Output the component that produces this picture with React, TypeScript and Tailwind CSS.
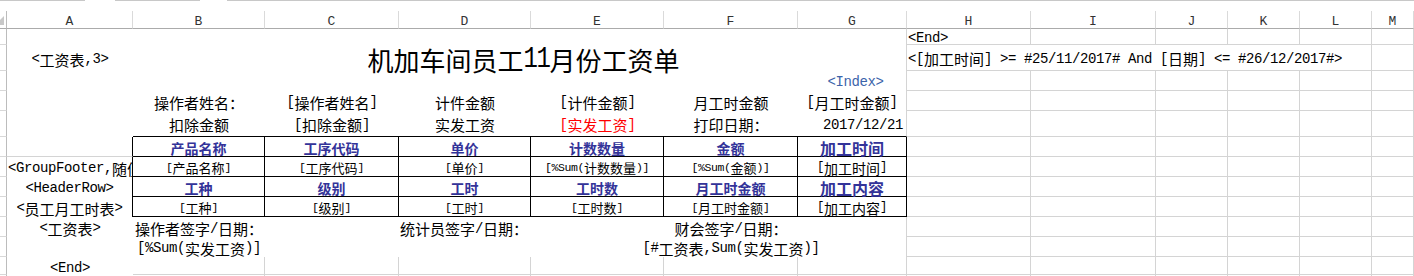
import React from "react";

type Sz = "m" | "s" | "g" | "t";

const cjkCls: Record<Sz, string> = {
  m: "text-[15px] font-['Noto_Sans_CJK_SC',sans-serif]",
  s: "text-[13px] font-['Noto_Sans_CJK_SC',sans-serif]",
  g: "text-[14px] font-['Noto_Sans_CJK_SC',sans-serif]",
  t: "text-[26px] font-['Noto_Sans_CJK_SC',sans-serif]",
};
const monoCls: Record<Sz, string> = {
  m: "text-[14px] tracking-[-0.4px] font-['Liberation_Mono',monospace]",
  s: "text-[11.5px] tracking-[-0.4px] font-['Liberation_Mono',monospace]",
  g: "text-[12.2px] tracking-[-0.32px] font-['Liberation_Mono',monospace]",
  t: "inline-block origin-bottom scale-y-[1.25] translate-y-[2px] text-[24px] tracking-[-1.4px] font-['Liberation_Mono',monospace]",
};

function T({ s, z = "m" }: { s: string; z?: Sz }) {
  const parts = s.match(/[\x20-\x7e]+|[^\x20-\x7e]+/g) || [];
  return (
    <>
      {parts.map((p, i) =>
        /[\x20-\x7e]/.test(p[0]) ? (
          <span key={i} className={monoCls[z]}>
            {p}
          </span>
        ) : (
          <span key={i} className={cjkCls[z]}>
            {p}
          </span>
        )
      )}
    </>
  );
}

const G = "border-r border-b border-[#d4d4d4]";
const CELL = "flex items-center whitespace-pre leading-none pt-[2px] min-w-0";
const SL = "border-r border-r-[#bcbcbc] border-b border-b-[#d8d8d8]";
const TB = "border-r border-b border-black";
const HB = "text-[14px] font-bold text-[#333399] font-['Noto_Sans_CJK_SC',sans-serif]";
const HG = "text-[16px] font-bold text-[#333399] font-['Noto_Sans_CJK_SC',sans-serif]";

function Grid5() {
  return (
    <>
      <div className={G} />
      <div className={G} />
      <div className={G} />
      <div className={G} />
      <div className={G} />
      <div className={G} />
    </>
  );
}

const letters = ["A", "B", "C", "D", "E", "F", "G", "H", "I", "J", "K", "L", "M"];

export default function App() {
  return (
    <div className="w-[1414px] h-[276px] overflow-hidden bg-white text-black">
      {/* top strip */}
      <div className="flex h-[11px]">
        <div className="w-[85px] border-t border-[#c8c8c8]" />
        <div className="w-[30px]" />
        <div className="w-[85px] border-t border-[#c8c8c8]" />
        <div className="w-[27px]" />
        <div className="flex-1 border-t border-[#c8c8c8]" />
      </div>
      <div className="grid grid-cols-[7px_126px_132px_134px_132px_133px_134px_109px_124px_125px_72px_72px_72px_1fr] grid-rows-[18px_16px_26px_20px_20px_26px_20px_20px_20px_20px_20px_20px_18px_20px]">
        {/* header row */}
        <div className="border-r border-[#bcbcbc] border-b border-b-[#ababab]">
          <svg width="7" height="17" viewBox="0 0 7 17">
            <polygon points="0,9 4,5 4,14 0,14" fill="#c8c8c8" />
          </svg>
        </div>
        {letters.map((l) => (
          <div
            key={l}
            className="flex items-center justify-center pt-[3px] border-r border-r-[#dadada] border-b border-b-[#ababab] text-[13px] leading-none text-[#333] font-['Liberation_Mono',monospace]"
          >
            {l}
          </div>
        ))}

        {/* r1 */}
        <div className={SL} />
        <div />
        <div />
        <div />
        <div />
        <div />
        <div />
        <div className="border-r border-[#d4d4d4]" />
        <div className={`${CELL} ${G} pl-[1px]`}>
          <T s="<End>" />
        </div>
        <div className={G} />
        <div className={G} />
        <div className={G} />
        <div className={G} />
        <div className={G} />

        {/* r2 */}
        <div className={SL} />
        <div className={`${CELL} justify-center`}>
          <T s="<工资表,3>" />
        </div>
        <div className={`${CELL} col-span-6 justify-center pl-[8px] pt-[4px] border-r border-[#d4d4d4]`}>
          <T s="机加车间员工11月份工资单" z="t" />
        </div>
        <div className={`${CELL} col-span-5 pl-[1px] ${G}`}>
          <T s="<[加工时间] >= #25/11/2017# And [日期] <= #26/12/2017#>" />
        </div>
        <div className={G} />

        {/* r3 */}
        <div className={SL} />
        <div />
        <div />
        <div />
        <div />
        <div />
        <div />
        <div className={`${CELL} justify-center pl-[7px] border-r border-[#d4d4d4] text-[#3c64aa]`}>
          <T s="<Index>" />
        </div>
        <Grid5 />
        <div className="hidden" />

        {/* r4 */}
        <div className={SL} />
        <div />
        <div className={`${CELL} justify-center`}>
          <T s="操作者姓名：" />
        </div>
        <div className={`${CELL} justify-center`}>
          <T s="[操作者姓名]" />
        </div>
        <div className={`${CELL} justify-center`}>
          <T s="计件金额" />
        </div>
        <div className={`${CELL} justify-center`}>
          <T s="[计件金额]" />
        </div>
        <div className={`${CELL} justify-center`}>
          <T s="月工时金额" />
        </div>
        <div className={`${CELL} justify-center border-r border-[#d4d4d4]`}>
          <T s="[月工时金额]" />
        </div>
        <Grid5 />
        <div className="hidden" />

        {/* r5 */}
        <div className={SL} />
        <div />
        <div className={`${CELL} justify-center border-b border-black`}>
          <T s="扣除金额" />
        </div>
        <div className={`${CELL} justify-center border-b border-black`}>
          <T s="[扣除金额]" />
        </div>
        <div className={`${CELL} justify-center border-b border-black`}>
          <T s="实发工资" />
        </div>
        <div className={`${CELL} justify-center border-b border-black text-[#ff0000]`}>
          <T s="[实发工资]" />
        </div>
        <div className={`${CELL} justify-center border-b border-black`}>
          <T s="打印日期：" />
        </div>
        <div className={`${CELL} justify-end pr-[3px] border-b border-b-black border-r border-r-[#d4d4d4]`}>
          <T s="2017/12/21" />
        </div>
        <Grid5 />
        <div className="hidden" />

        {/* r6 table header */}
        <div className={SL} />
        <div className="border-r border-r-black border-b border-b-[#d4d4d4]" />
        <div className={`${CELL} justify-center ${TB} ${HB}`}>产品名称</div>
        <div className={`${CELL} justify-center ${TB} ${HB}`}>工序代码</div>
        <div className={`${CELL} justify-center ${TB} ${HB}`}>单价</div>
        <div className={`${CELL} justify-center ${TB} ${HB}`}>计数数量</div>
        <div className={`${CELL} justify-center ${TB} ${HB}`}>金额</div>
        <div className={`${CELL} justify-center ${TB} ${HG}`}>加工时间</div>
        <Grid5 />
        <div className="hidden" />

        {/* r7 table data */}
        <div className={SL} />
        <div className={`${CELL} pl-[1px] overflow-hidden border-r border-black`}>
          <T s="<GroupFooter,随便>" />
        </div>
        <div className={`${CELL} justify-center ${TB}`}>
          <T s="[产品名称]" z="s" />
        </div>
        <div className={`${CELL} justify-center ${TB}`}>
          <T s="[工序代码]" z="s" />
        </div>
        <div className={`${CELL} justify-center ${TB}`}>
          <T s="[单价]" z="s" />
        </div>
        <div className={`${CELL} justify-center ${TB}`}>
          <T s="[%Sum(计数数量)]" z="s" />
        </div>
        <div className={`${CELL} justify-center ${TB}`}>
          <T s="[%Sum(金额)]" z="s" />
        </div>
        <div className={`${CELL} justify-center ${TB}`}>
          <T s="[加工时间]" z="g" />
        </div>
        <Grid5 />
        <div className="hidden" />

        {/* r8 table header 2 */}
        <div className={SL} />
        <div className={`${CELL} justify-center border-r border-black`}>
          <T s="<HeaderRow>" />
        </div>
        <div className={`${CELL} justify-center ${TB} ${HB}`}>工种</div>
        <div className={`${CELL} justify-center ${TB} ${HB}`}>级别</div>
        <div className={`${CELL} justify-center ${TB} ${HB}`}>工时</div>
        <div className={`${CELL} justify-center ${TB} ${HB}`}>工时数</div>
        <div className={`${CELL} justify-center ${TB} ${HB}`}>月工时金额</div>
        <div className={`${CELL} justify-center ${TB} ${HG}`}>加工内容</div>
        <Grid5 />
        <div className="hidden" />

        {/* r9 table data 2 */}
        <div className={SL} />
        <div className={`${CELL} justify-center border-r border-black`}>
          <T s="<员工月工时表>" />
        </div>
        <div className={`${CELL} justify-center ${TB}`}>
          <T s="[工种]" z="s" />
        </div>
        <div className={`${CELL} justify-center ${TB}`}>
          <T s="[级别]" z="s" />
        </div>
        <div className={`${CELL} justify-center ${TB}`}>
          <T s="[工时]" z="s" />
        </div>
        <div className={`${CELL} justify-center ${TB}`}>
          <T s="[工时数]" z="s" />
        </div>
        <div className={`${CELL} justify-center ${TB}`}>
          <T s="[月工时金额]" z="s" />
        </div>
        <div className={`${CELL} justify-center ${TB}`}>
          <T s="[加工内容]" z="g" />
        </div>
        <Grid5 />
        <div className="hidden" />

        {/* r10 signatures */}
        <div className={SL} />
        <div className={`${CELL} justify-center`}>
          <T s="<工资表>" />
        </div>
        <div className={`${CELL} pl-[2px] pt-[3px]`}>
          <T s="操作者签字/日期：" />
        </div>
        <div />
        <div className={`${CELL} pl-[1px] pt-[3px]`}>
          <T s="统计员签字/日期：" />
        </div>
        <div />
        <div className={`${CELL} justify-center pt-[3px]`}>
          <T s="财会签字/日期：" />
        </div>
        <div className="border-r border-[#d4d4d4]" />
        <Grid5 />
        <div className="hidden" />

        {/* r11 sums */}
        <div className={SL} />
        <div />
        <div className={`${CELL} pl-[4px]`}>
          <T s="[%Sum(实发工资)]" />
        </div>
        <div />
        <div />
        <div />
        <div className={`${CELL} justify-center`}>
          <T s="[#工资表,Sum(实发工资)]" />
        </div>
        <div className="border-r border-[#d4d4d4]" />
        <Grid5 />
        <div className="hidden" />

        {/* r12 end */}
        <div className={SL} />
        <div className={`${CELL} justify-center pt-[4px]`}>
          <T s="<End>" />
        </div>
        <div className={G} />
        <div className={G} />
        <div className={G} />
        <div className={G} />
        <div className={G} />
        <div className={G} />
        <Grid5 />
        <div className="hidden" />

        {/* r13 */}
        <div className={SL} />
        <div />
        <div className={G} />
        <div className={G} />
        <div className={G} />
        <div className={G} />
        <div className={G} />
        <div className={G} />
        <Grid5 />
      </div>
    </div>
  );
}
